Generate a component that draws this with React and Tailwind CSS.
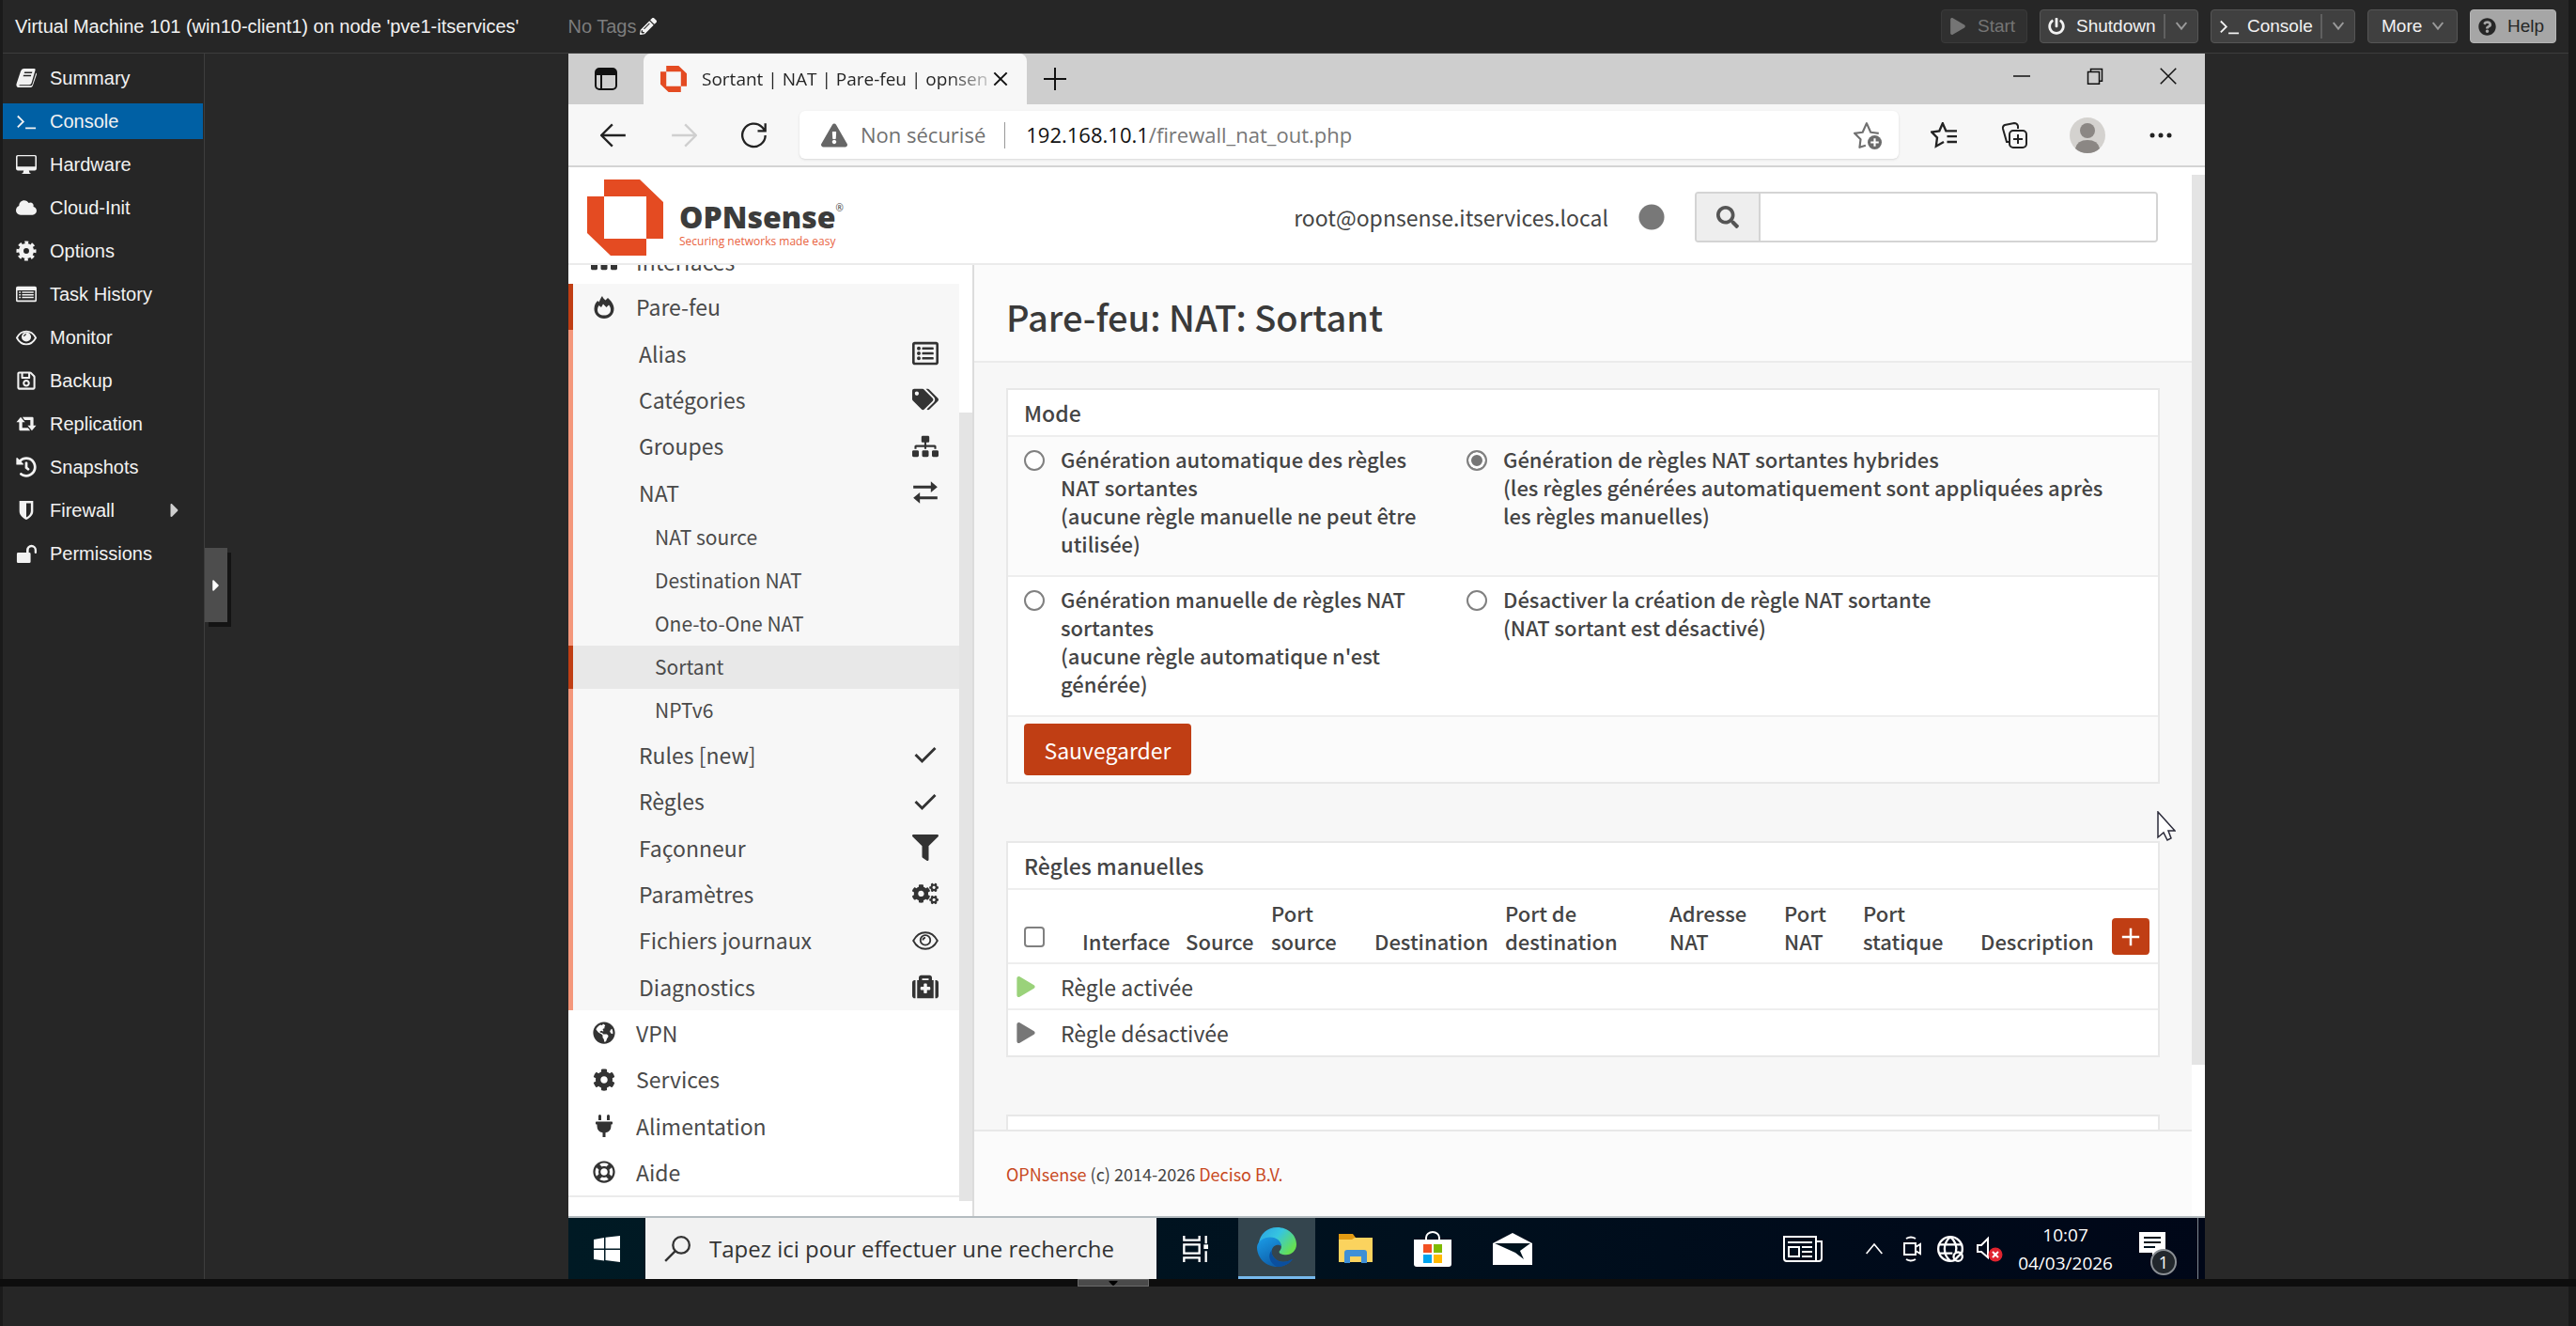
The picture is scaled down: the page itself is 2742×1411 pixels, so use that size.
import { useState } from 'react';
import {
    FaCloud, FaCog, FaHistory, FaPencilAlt, FaPlay, FaPowerOff, FaQuestionCircle, FaRegListAlt,
    FaRegSave, FaCaretRight, FaCaretDown, FaTags, FaSitemap, FaFilter, FaCogs, FaMedkit,
    FaGlobeAmericas, FaPlug, FaRegLifeRing, FaSearch, FaExclamationTriangle, FaCircle,
} from 'react-icons/fa';

/* ---------- small icons ---------- */

const Line = ({ children, className, box = '0 0 24 24', width = 2 }) => (
    <svg viewBox={box} className={className} fill="none" stroke="currentColor" strokeWidth={width} aria-hidden="true">
        {children}
    </svg>
);

const Solid = ({ children, className }) => (
    <svg viewBox="0 0 24 24" className={className} fill="currentColor" fillRule="evenodd" aria-hidden="true">
        {children}
    </svg>
);

const BookIcon = ({ className }) => (
    <Solid className={className}>
        <path d="M9 1h12q2 0 1.400 2L18 18q-.6 2-2.500 2H5q-1.500 0-1.500 1H17q1.500 0 2-1.500L23.300 6q1 .8.500 2.500L19.500 21q-.6 2-2.500 2H4q-4 0-3.500-4L5.500 4Q6.500 1 9 1zm1 4l-.5 1.600h9L19 5zm-1.200 3.500L8.300 10h9l.5-1.500z" />
    </Solid>
);

const TerminalIcon = ({ className }) => (
    <Line className={className}>
        <path d="M2 6l6.500 6.500L2 19M11 20h12" />
    </Line>
);

const DesktopIcon = ({ className }) => (
    <Solid className={className}>
        <path d="M2 1h20a2 2 0 0 1 2 2v14a2 2 0 0 1-2 2h-7l1 3h1v1H7v-1h1l1-3H2a2 2 0 0 1-2-2V3a2 2 0 0 1 2-2zm-.3 2v11.500h20.600V3a.5.500 0 0 0-.5-.5H2.200a.5.500 0 0 0-.5.500z" />
    </Solid>
);

const GearIcon = ({ className }) => (
    <svg viewBox="0 0 24 24" className={className} fill="none" stroke="currentColor" aria-hidden="true">
        <circle cx="12" cy="12" r="6" strokeWidth="5.500" />
        <circle cx="12" cy="12" r="9.500" strokeWidth="4" strokeDasharray="4 3.461" strokeDashoffset="2" />
    </svg>
);

const TaskIcon = ({ className }) => (
    <Solid className={className}>
        <path d="M2 3h20a2 2 0 0 1 2 2v14a2 2 0 0 1-2 2H2a2 2 0 0 1-2-2V5a2 2 0 0 1 2-2zm-.3 4.500v11.500h20.600V7.500z" />
        <path d="M3.500 9h2v1.600h-2zM7 9h13.500v1.600H7zM3.500 12h2v1.600h-2zM7 12h13.500v1.600H7zM3.500 15h2v1.600h-2zM7 15h13.500v1.600H7z" />
    </Solid>
);

const MonitorIcon = ({ className }) => (
    <Line className={className}>
        <path d="M1 12.500Q5 5 12 5t11 7.500Q19 20 12 20T1 12.500z" />
        <circle cx="12" cy="11.500" r="5.500" fill="currentColor" stroke="none" />
        <path d="M9.500 11Q9.500 8.500 12 8.500" stroke="#262626" strokeWidth="1.200" />
    </Line>
);

const RetweetIcon = ({ className }) => (
    <Solid className={className}>
        <path d="M5.500 4l5 6H7.300v6.500H14l2.500 3.500H5q-1.300 0-1.300-1.500V10H.5zM18.500 20l-5-6h3.200V7.500H10L7.500 4H19q1.300 0 1.300 1.500V14h3.200z" />
    </Solid>
);

const ShieldIcon = ({ className }) => (
    <Solid className={className}>
        <path d="M4 1h16v12c0 5-5 8.500-8 10-3-1.500-8-5-8-10zm8 2.700v16.500c2.500-1.500 5.300-4 5.300-7.200V3.700z" />
    </Solid>
);

const UnlockIcon = ({ className }) => (
    <Solid className={className}>
        <path d="M2.500 11H12V8a6 6 0 0 1 12 0v3q0 1-1.200 1T21.500 11V8a3.300 3.300 0 0 0-6.600 0v3h.6q1.500 0 1.500 1.500v9q0 1.500-1.500 1.500h-13Q1 23 1 21.500v-9Q1 11 2.500 11z" />
    </Solid>
);

const FireIcon = ({ className }) => (
    <Solid className={className}>
        <path d="M10 0c.6 2 2 3 3.500 4.500L16 2c3.500 3 6.500 7 6.500 11.500C22.500 19.500 18 24 12 24S1.500 19.500 1.500 13.500c0-4 2-7 3.700-8.500l1.300 1.500C7.500 4.500 8.500 2 10 0zM6.500 10c-1 1.500-1.500 3-1.500 4.500 0 4 3 6 7 6s7-2 7-6c0-2-.8-3.800-2-5L14.500 12 11 8.500 9 12z" />
    </Solid>
);

const EyeOutlineIcon = ({ className }) => (
    <Line className={className} width={1.6}>
        <path d="M1 12Q5 4.500 12 4.500T23 12Q19 19.500 12 19.500T1 12z" />
        <circle cx="12" cy="11.500" r="4.500" />
        <path d="M9.800 11.500Q9.800 9.300 12 9.300" />
    </Line>
);

const SwapIcon = ({ className }) => (
    <Solid className={className}>
        <path d="M1 5.700h16V2l6 5-6 5V8.300H1zM23 15.700H7V12l-6 5 6 5v-3.700h16z" />
    </Solid>
);

const CheckIcon = ({ className }) => (
    <Line className={className} width={2.5}>
        <path d="M3 12l6 6L21 6" />
    </Line>
);

const ChevronIcon = ({ className }) => (
    <Line className={className} width={3}>
        <path d="M4 6l8 10 8-10" />
    </Line>
);

const OpnMark = ({ className }) => (
    <svg viewBox="0 0 81 81" className={className} aria-hidden="true">
        <path fill="#e44b22" fillRule="evenodd" d="M18 0h38l25 24v39H63v18H25L0 57V18h18zM18 18v45h45V18z" />
    </svg>
);

const EdgeIcon = ({ className }) => (
    <svg viewBox="0 0 24 24" className={className} aria-hidden="true">
        <defs>
            <linearGradient id="edgeTop" x1="0" y1="0" x2="1" y2="0.600">
                <stop offset="0" stopColor="#2a9fe4" />
                <stop offset="0.500" stopColor="#36c5e0" />
                <stop offset="1" stopColor="#66e052" />
            </linearGradient>
            <linearGradient id="edgeLow" x1="0" y1="0" x2="0.600" y2="1">
                <stop offset="0" stopColor="#1b9de8" />
                <stop offset="1" stopColor="#0c59a4" />
            </linearGradient>
        </defs>
        <path fill="url(#edgeTop)" d="M1 10C1.800 4 6.400 0 12.200 0 19 0 24 4.800 24 10.300c0 4-3 6.400-6.300 6.400-2.600 0-4.200-.8-4.200-1.700 0-.7 1.300-1.200 1.300-3.300C14.800 9 12 7 8.500 7 5 7 2.500 8 1 10z" />
        <path fill="url(#edgeLow)" d="M0 12c.3-3.500 4-6 8-6 4 0 6.800 2.500 6.800 5.500-1-1.500-5-1.200-5.800 2.300-.8 3.400 2.800 7.200 7 7.200 2.400 0 4.300-.9 5.700-1.700C19.700 22.300 16.200 24 12.200 24 5.500 24 0 18.700 0 12z" />
        <path fill="#0b4f9e" d="M9 13.800c-.8 3.400 2.800 7.200 7 7.200 2.400 0 4.300-.9 5.700-1.700-2 3-5.500 4.700-9.500 4.700C8 22 6 17 9 13.800z" />
    </svg>
);

const FolderIcon = ({ className }) => (
    <svg viewBox="0 0 38 32" className={className} aria-hidden="true">
        <path fill="#e39b12" d="M1 0h15l3 4h17v8H1z" />
        <path fill="#fbd35e" d="M1 6h14l3-2h19v26H1z" />
        <path fill="#3f8fd6" d="M7 31V20q0-3 3-3h18q3 0 3 3v11h-6v-7H13v7z" />
    </svg>
);

const StoreIcon = ({ className }) => (
    <svg viewBox="0 0 40 40" className={className} aria-hidden="true">
        <path d="M13 11V8a7 6 0 0 1 14 0v3" fill="none" stroke="#fff" strokeWidth="2" />
        <path d="M0 10h40v26a3 3 0 0 1-3 3H3a3 3 0 0 1-3-3z" fill="#fff" />
        <path d="M10 15h9v9h-9z" fill="#f25022" />
        <path d="M21 15h9v9h-9z" fill="#7fba00" />
        <path d="M10 26h9v9h-9z" fill="#00a4ef" />
        <path d="M21 26h9v9h-9z" fill="#ffb900" />
    </svg>
);

const MailIcon = ({ className }) => (
    <svg viewBox="0 0 42 34" className={className} aria-hidden="true">
        <path fill="#fff" d="M0 11L21 0l21 11v23H0z" />
        <path fill="#00131e" d="M2 11h38L29 19l4 9-9-7z" />
    </svg>
);

const FavAddIcon = ({ className }) => (
    <svg viewBox="0 0 28 28" className={className} fill="none" stroke="#707070" strokeWidth="2" aria-hidden="true">
        <path d="M12 24l-6 2 1-8-6-6 8-1 4-9 4 9 8 1" strokeLinejoin="round" />
        <circle cx="21" cy="21" r="7" fill="#6b6b6b" stroke="none" />
        <path d="M21 17v8M17 21h8" stroke="#fff" />
    </svg>
);

const CollectionsIcon = ({ className }) => (
    <Line className={className} box="0 0 28 28">
        <path d="M8 21H6L2 7q-.5-3 2-4l10-2q3 0 4 3v3" />
        <rect x="9" y="9" width="18" height="18" rx="4" />
        <path d="M18 13v10M13 18h10" />
    </Line>
);

/* ---------- data ---------- */

const vmMenu = [
    { label: 'Summary', icon: BookIcon },
    { label: 'Console', icon: TerminalIcon, active: true },
    { label: 'Hardware', icon: DesktopIcon },
    { label: 'Cloud-Init', icon: FaCloud },
    { label: 'Options', icon: GearIcon },
    { label: 'Task History', icon: TaskIcon },
    { label: 'Monitor', icon: MonitorIcon },
    { label: 'Backup', icon: FaRegSave },
    { label: 'Replication', icon: RetweetIcon },
    { label: 'Snapshots', icon: FaHistory },
    { label: 'Firewall', icon: ShieldIcon, more: true },
    { label: 'Permissions', icon: UnlockIcon },
];

// level 0 = section, 1 = entry of the open section, 2 = entry below NAT
const opnMenu = [
    { label: 'Pare-feu', level: 0, icon: FireIcon, open: true },
    { label: 'Alias', level: 1, icon: FaRegListAlt },
    { label: 'Catégories', level: 1, icon: FaTags },
    { label: 'Groupes', level: 1, icon: FaSitemap },
    { label: 'NAT', level: 1, icon: SwapIcon },
    { label: 'NAT source', level: 2 },
    { label: 'Destination NAT', level: 2 },
    { label: 'One-to-One NAT', level: 2 },
    { label: 'Sortant', level: 2, active: true },
    { label: 'NPTv6', level: 2 },
    { label: 'Rules [new]', level: 1, icon: CheckIcon },
    { label: 'Règles', level: 1, icon: CheckIcon },
    { label: 'Façonneur', level: 1, icon: FaFilter },
    { label: 'Paramètres', level: 1, icon: FaCogs },
    { label: 'Fichiers journaux', level: 1, icon: EyeOutlineIcon },
    { label: 'Diagnostics', level: 1, icon: FaMedkit },
    { label: 'VPN', level: 0, icon: FaGlobeAmericas },
    { label: 'Services', level: 0, icon: FaCog },
    { label: 'Alimentation', level: 0, icon: FaPlug },
    { label: 'Aide', level: 0, icon: FaRegLifeRing },
];

const modes = [
    {
        id: 'automatic',
        lines: ['Génération automatique des règles', 'NAT sortantes', '(aucune règle manuelle ne peut être', 'utilisée)'],
    },
    {
        id: 'hybrid',
        lines: ['Génération de règles NAT sortantes hybrides', '(les règles générées automatiquement sont appliquées après', 'les règles manuelles)'],
    },
    {
        id: 'advanced',
        lines: ['Génération manuelle de règles NAT', 'sortantes', "(aucune règle automatique n'est", 'générée)'],
    },
    {
        id: 'disabled',
        lines: ['Désactiver la création de règle NAT sortante', '(NAT sortant est désactivé)'],
    },
];

const columns = [
    { label: 'Interface', size: 'w-[116px] pl-[23px]' },
    { label: 'Source', size: 'w-[91px] pl-[17px]' },
    { label: 'Port source', size: 'w-[110px] pl-[17px]' },
    { label: 'Destination', size: 'w-[139px] pl-[17px]' },
    { label: 'Port de destination', size: 'w-[175px] pl-[17px]' },
    { label: 'Adresse NAT', size: 'w-[122px] pl-[17px]' },
    { label: 'Port NAT', size: 'w-[84px] pl-[17px]' },
    { label: 'Port statique', size: 'w-[125px] pl-[17px]' },
    { label: 'Description', size: 'w-[140px] pl-[17px]' },
];

/* ---------- Proxmox shell ---------- */

const TopBar = () => (
    <header className="flex h-[57px] shrink-0 items-center border-b border-[#3d3d3d] px-[13px] text-xl">
        <h1 className="whitespace-nowrap">Virtual Machine 101 (win10-client1) on node 'pve1-itservices'</h1>
        <span className="ml-[52px] text-[#7d7d7d]">No Tags</span>
        <button type="button" aria-label="Edit Tags" className="ml-1">
            <FaPencilAlt className="size-[18px]" />
        </button>
        <div className="ml-auto flex gap-[13px] text-[19px]">
            <button type="button" disabled className="flex h-9 w-[92px] items-center gap-3 rounded border border-[#3a3a3a] bg-[#303030] pl-2 text-[#757575]">
                <FaPlay className="size-[18px]" />
                Start
            </button>
            <div className="flex h-9 w-[169px] items-center rounded border border-[#565656] bg-[#404040]">
                <button type="button" className="flex items-center gap-3 pl-2">
                    <FaPowerOff className="size-[18px]" />
                    Shutdown
                </button>
                <button type="button" aria-label="Shutdown options" className="ml-auto flex h-[26px] w-9 items-center justify-center border-l-2 border-[#606060] text-[#9a9a9a]">
                    <ChevronIcon className="size-4" />
                </button>
            </div>
            <div className="flex h-9 w-[154px] items-center rounded border border-[#565656] bg-[#404040]">
                <button type="button" className="flex items-center gap-2 pl-2">
                    <TerminalIcon className="size-[22px]" />
                    Console
                </button>
                <button type="button" aria-label="Console options" className="ml-auto flex h-[26px] w-9 items-center justify-center border-l-2 border-[#606060] text-[#9a9a9a]">
                    <ChevronIcon className="size-4" />
                </button>
            </div>
            <button type="button" className="flex h-9 w-24 items-center justify-between rounded border border-[#565656] bg-[#404040] pr-3 pl-3.5">
                More
                <ChevronIcon className="size-4 text-[#9a9a9a]" />
            </button>
            <button type="button" className="flex h-9 w-[92px] items-center gap-3 rounded border border-[#b5b5b5] bg-[#a6a6a6] pl-2 text-[#262626]">
                <FaQuestionCircle className="size-[19px]" />
                Help
            </button>
        </div>
    </header>
);

const VmNav = () => (
    <nav className="w-[215px] shrink-0 border-r border-[#3d3d3d] pt-[7px] text-xl">
        <ul className="flex flex-col gap-2">
            {vmMenu.map(({ label, icon: Icon, active, more }) => (
                <li key={label}>
                    <a
                        href="#"
                        className={`mr-px flex h-[38px] items-center pl-3 ${active ? 'bg-[#0060a4]' : ''}`}
                    >
                        <span className="flex w-[26px] justify-center">
                            <Icon className="size-[22px]" />
                        </span>
                        <span className="ml-3">{label}</span>
                        {more && <FaCaretRight className="mr-[18px] ml-auto size-6 text-[#cfcfcf]" />}
                    </a>
                </li>
            ))}
        </ul>
    </nav>
);

/* ---------- browser in the guest ---------- */

const TabStrip = () => (
    <div className="flex h-[54px] shrink-0 items-stretch bg-[#cecece] text-[#111]">
        <button type="button" aria-label="Tab actions" className="flex w-20 items-center justify-center">
            <svg viewBox="0 0 24 24" className="size-6" fill="none" stroke="currentColor" strokeWidth="2">
                <rect x="1" y="1" width="22" height="22" rx="4" />
                <path d="M2 5h20" strokeWidth="6" />
                <path d="M7 7v15" />
            </svg>
        </button>
        <div className="flex w-[408px] items-center rounded-t-lg bg-[#f7f7f7] pr-4 pl-[18px]">
            <OpnMark className="size-7 shrink-0" />
            <span className="ml-4 flex-1 bg-linear-to-r from-[#222] from-85% to-[#ccc] bg-clip-text text-[19px] whitespace-nowrap text-transparent">
                Sortant | NAT | Pare-feu | opnsen
            </span>
            <button type="button" aria-label="Close tab" className="flex size-6 items-center justify-center">
                <Line className="size-4" width={3}>
                    <path d="M2 2l20 20M22 2L2 22" />
                </Line>
            </button>
        </div>
        <button type="button" aria-label="New tab" className="ml-[18px] flex items-center">
            <Line className="size-6">
                <path d="M12 0v24M0 12h24" />
            </Line>
        </button>
        <div className="ml-auto flex pb-1.5">
            <button type="button" aria-label="Minimize" className="flex w-[78px] items-center justify-center">
                <Line className="size-[18px]">
                    <path d="M0 12h24" />
                </Line>
            </button>
            <button type="button" aria-label="Restore" className="flex w-[78px] items-center justify-center">
                <Line className="size-[18px]">
                    <path d="M2 6h16v17H2zM6 6V2h16v17h-4" />
                </Line>
            </button>
            <button type="button" aria-label="Close" className="flex w-[78px] items-center justify-center">
                <Line className="size-[18px]">
                    <path d="M1 1l22 22M23 1L1 23" />
                </Line>
            </button>
        </div>
    </div>
);

const AddressBar = () => (
    <div className="flex h-[67px] shrink-0 items-center border-b-2 border-[#d4d4d4] bg-[#f7f7f7] pr-[35px] pl-[34px] text-[#222]">
        <button type="button" aria-label="Back">
            <Line className="size-7">
                <path d="M23 12H1M11 2L1 12l10 10" />
            </Line>
        </button>
        <button type="button" aria-label="Forward" disabled className="ml-[47px] text-[#cfcfcf]">
            <Line className="size-7">
                <path d="M1 12h22M13 2l10 10-10 10" />
            </Line>
        </button>
        <button type="button" aria-label="Reload" className="ml-[47px]">
            <Line className="size-7">
                <path d="M22 12a10.500 10.500 0 1 1-3-7.500L22 8M22 1v7h-7" />
            </Line>
        </button>
        <div className="ml-[34px] flex h-[51px] flex-1 items-center rounded-md bg-white pr-[18px] pl-[23px] shadow-sm">
            <FaExclamationTriangle className="size-7 text-[#666]" />
            <span className="ml-3.5 text-[22px] whitespace-nowrap text-[#707070]">Non sécurisé</span>
            <span className="mr-[22px] ml-5 h-7 w-px bg-[#999]" />
            <span className="text-[22px] whitespace-nowrap text-[#777]">
                <span className="text-[#111]">192.168.10.1</span>/firewall_nat_out.php
            </span>
            <button type="button" aria-label="Add to favorites" className="ml-auto">
                <FavAddIcon className="size-[30px]" />
            </button>
        </div>
        <button type="button" aria-label="Favorites" className="ml-[34px]">
            <Line className="size-7">
                <path d="M12 18l-7 4 1-8-5-5 7-1 3-7 3 7h2M16 8h8M15 13h9M15 18h9" />
            </Line>
        </button>
        <button type="button" aria-label="Collections" className="ml-[47px]">
            <CollectionsIcon className="size-7" />
        </button>
        <button type="button" aria-label="Profile" className="ml-[45px]">
            <svg viewBox="0 0 38 38" className="size-[38px]">
                <circle cx="19" cy="19" r="19" fill="#d4d2cf" />
                <circle cx="19" cy="14" r="8" fill="#8b8784" />
                <path d="M6 33q2-9 13-9t13 9q-5 5-13 5T6 33z" fill="#8b8784" />
            </svg>
        </button>
        <button type="button" aria-label="Settings" className="ml-[47px]">
            <svg viewBox="0 0 24 24" className="size-6" fill="currentColor">
                <circle cx="3" cy="12" r="2.500" />
                <circle cx="12" cy="12" r="2.500" />
                <circle cx="21" cy="12" r="2.500" />
            </svg>
        </button>
    </div>
);

/* ---------- OPNsense page ---------- */

const OpnHeader = () => (
    <header className="flex h-[104px] shrink-0 items-center border-b-2 border-[#ebebeb] bg-white pt-1 pr-9 pl-5">
        <OpnMark className="size-[81px]" />
        <div className="ml-[17px] pt-4 font-['Open_Sans',sans-serif]">
            <div className="flex text-[32px] leading-9 font-extrabold text-[#3c3c3b]">
                OPNsense
                <sup className="top-0 text-[10px] leading-4 font-normal">®</sup>
            </div>
            <div className="text-xs leading-4 text-[#e9633f]">Securing networks made easy</div>
        </div>
        <span className="ml-auto text-[23px] whitespace-nowrap">root@opnsense.itservices.local</span>
        <FaCircle className="ml-8 size-7 text-[#787878]" />
        <div className="ml-8 flex h-[54px] w-[493px] overflow-hidden rounded border-2 border-[#d4d4d4]">
            <label htmlFor="menu-search" className="flex w-[68px] items-center justify-center border-r-2 border-[#d4d4d4] bg-[#eeeeee]">
                <FaSearch className="size-6 text-[#555]" />
            </label>
            <input id="menu-search" type="text" aria-label="Search" className="min-w-0 flex-1 bg-white px-3 outline-none" />
        </div>
    </header>
);

const rowTone = ({ level, open, active }) => {
    if (active) return 'border-[#c03e14] bg-[#e8e8e8]';
    if (open) return 'border-[#c03e14] bg-[#f7f7f7]';
    if (level > 0) return 'border-[#f4977b] bg-[#f7f7f7]';
    return 'border-white bg-white';
};

const OpnNav = () => (
    <nav className="flex w-[432px] shrink-0 bg-white text-[23px] text-[#4a4a4a]">
        <div className="flex min-h-0 flex-1 flex-col">
            {/* scrolled half out of view */}
            <div className="flex h-5 shrink-0 items-end overflow-hidden pb-3 pl-[24px] leading-6">
                <FaSitemap className="size-7 shrink-0 text-[#333]" />
                <span className="ml-5">Interfaces</span>
            </div>
            <ul className="flex flex-1 flex-col border-b-2 border-[#ebebeb]">
                {opnMenu.map((item) => {
                    const Icon = item.icon;
                    if (item.level === 2) {
                        return (
                            <li key={item.label} className="h-[46px] shrink-0">
                                <a href="#" className={`flex h-full items-center border-l-[5px] pl-[87px] text-[21px] ${rowTone(item)}`}>
                                    {item.label}
                                </a>
                            </li>
                        );
                    }
                    return (
                        <li key={item.label} className="min-h-[49px] flex-1">
                            <a href="#" className={`flex h-full items-center border-l-[5px] ${rowTone(item)}`}>
                                {item.level === 0 && (
                                    <span className="ml-[19px] flex w-7 justify-center">
                                        <Icon className="size-6 text-[#333]" />
                                    </span>
                                )}
                                <span className={item.level === 0 ? 'ml-5' : 'ml-[70px]'}>{item.label}</span>
                                {item.level === 1 && (
                                    <span className="mr-[21px] ml-auto flex w-[30px] justify-center">
                                        <Icon className="size-7 text-[#333]" />
                                    </span>
                                )}
                            </a>
                        </li>
                    );
                })}
            </ul>
            <div className="h-5 shrink-0" />
        </div>
        <div className="flex w-4 flex-col border-r-2 border-[#dcdcdc] pt-[157px] pb-4">
            <div className="flex-1 bg-[#e4e4e4]" />
        </div>
    </nav>
);

const ModeOption = ({ id, lines, checked, onChange }) => (
    <label className="flex gap-[17px]">
        <input
            type="radio"
            name="mode"
            value={id}
            checked={checked}
            onChange={() => onChange(id)}
            className="mt-1.5 size-[22px] shrink-0 appearance-none rounded-full border-2 border-[#808080] bg-white checked:bg-[#767676] checked:shadow-[inset_0_0_0_3px_white]"
        />
        <span className="text-[22px] leading-[30px] font-medium whitespace-nowrap">
            {lines.map((line) => (
                <span key={line} className="block">{line}</span>
            ))}
        </span>
    </label>
);

const ModeCard = () => {
    const [mode, setMode] = useState('hybrid');

    return (
        <form onSubmit={(e) => e.preventDefault()} className="border-2 border-[#e8e8e8] bg-white">
            <h2 className="flex h-12 items-center pl-[17px] font-medium">Mode</h2>
            <div className="grid min-h-[149px] grid-cols-[471px_1fr] border-t-2 border-[#eeeeee] bg-[#fbfbfb] pt-2 pl-[17px]">
                {modes.slice(0, 2).map((m) => (
                    <ModeOption key={m.id} {...m} checked={mode === m.id} onChange={setMode} />
                ))}
            </div>
            <div className="grid min-h-[149px] grid-cols-[471px_1fr] border-t-2 border-[#eeeeee] pt-2 pl-[17px]">
                {modes.slice(2).map((m) => (
                    <ModeOption key={m.id} {...m} checked={mode === m.id} onChange={setMode} />
                ))}
            </div>
            <div className="border-t-2 border-[#eeeeee] bg-[#fbfbfb] py-[7px] pl-[17px]">
                <button type="submit" className="h-[55px] w-[178px] rounded bg-[#c03e14] text-white">
                    Sauvegarder
                </button>
            </div>
        </form>
    );
};

const RulesCard = () => (
    <section className="border-2 border-[#e8e8e8] bg-white">
        <h2 className="flex h-12 items-center pl-[17px] font-medium">Règles manuelles</h2>
        <table className="w-full table-fixed border-collapse text-left">
            <thead>
                <tr className="h-[79px] border-t-2 border-[#eeeeee] align-bottom text-[22px] leading-[30px]">
                    <th className="w-14 pb-4 pl-[17px]">
                        <input
                            type="checkbox"
                            aria-label="Tout sélectionner"
                            className="block size-[22px] appearance-none rounded border-2 border-[#808080] bg-white"
                        />
                    </th>
                    {columns.map(({ label, size }) => (
                        <th key={label} className={`${size} pb-2 font-medium`}>{label}</th>
                    ))}
                    <th className="w-[66px] pb-2 pl-[17px]">
                        <button type="button" aria-label="Ajouter" className="flex h-[39px] w-10 items-center justify-center rounded bg-[#c03e14] text-white">
                            <Line className="size-5" width={3}>
                                <path d="M12 1v22M1 12h22" />
                            </Line>
                        </button>
                    </th>
                </tr>
            </thead>
            <tbody>
                <tr className="h-[49px] border-t-2 border-[#eeeeee]">
                    <td className="pl-2">
                        <FaPlay className="size-[22px] text-[#9ad27a]" />
                    </td>
                    <td colSpan={10}>Règle activée</td>
                </tr>
                <tr className="h-[49px] border-t-2 border-[#eeeeee]">
                    <td className="pl-2">
                        <FaPlay className="size-[22px] text-[#777]" />
                    </td>
                    <td colSpan={10}>Règle désactivée</td>
                </tr>
            </tbody>
        </table>
    </section>
);

const OpnPage = () => (
    <div className="flex min-h-0 flex-1 font-['Noto_Sans_CJK_SC',sans-serif] text-[#444]">
        <div className="flex min-w-0 flex-1 flex-col">
            <OpnHeader />
            <div className="flex min-h-0 flex-1">
                <OpnNav />
                <main className="flex min-w-0 flex-1 flex-col bg-[#f7f7f7] text-[23px] leading-7">
                    <div className="flex h-[104px] shrink-0 items-center border-b-2 border-[#ebebeb] bg-[#fbfbfb] px-[34px] pt-2">
                        <h1 className="text-[38px] font-medium whitespace-nowrap text-[#3a3a3a]">Pare-feu: NAT: Sortant</h1>
                    </div>
                    <div className="relative flex min-h-0 flex-1 flex-col gap-[61px] overflow-hidden pt-[27px] pr-[34px] pl-[34px]">
                        <ModeCard />
                        <RulesCard />
                        <section className="h-24 shrink-0 border-2 border-[#e8e8e8] bg-white" />
                        {/* mouse pointer of the guest */}
                        <svg viewBox="0 0 20 32" className="absolute top-[477px] right-[17px] h-8 w-5" fill="#fff" stroke="#2b2b3a" strokeWidth="1.500">
                            <path d="M1 1v27l6-5 4 8 4-2-3-8h7z" />
                        </svg>
                    </div>
                    <footer className="flex h-[92px] shrink-0 items-center border-t-2 border-[#e8e8e8] bg-[#fbfbfb] pl-[34px] text-lg">
                        <p>
                            <a href="#" className="text-[#c8491f]">OPNsense</a> (c) 2014-2026{' '}
                            <a href="#" className="text-[#c8491f]">Deciso B.V.</a>
                        </p>
                    </footer>
                </main>
            </div>
        </div>
        <div className="flex w-3.5 shrink-0 flex-col bg-white pt-2 pb-[161px]">
            <div className="flex-1 bg-[#e4e4e4]" />
        </div>
    </div>
);

/* ---------- Windows taskbar ---------- */

const Taskbar = () => (
    <footer className="flex h-[67px] shrink-0 items-stretch border-t-2 border-[#b4bcc0] bg-linear-to-r from-[#001a24] to-[#000718] text-white">
        <button type="button" aria-label="Démarrer" className="flex w-[82px] items-center justify-center">
            <svg viewBox="0 0 28 28" className="size-7" fill="#fff">
                <path d="M0 4l11-2v11.500H0zM12.500 1.800L28 0v13.500H12.500zM0 15h11v11.500L0 25zM12.500 15H28v13l-15.500-2z" />
            </svg>
        </button>
        <div className="flex w-[544px] items-center bg-[#f2f2f2] pl-5 text-[#333]">
            <Line className="size-7" width={2}>
                <circle cx="15.500" cy="8.500" r="7.500" />
                <path d="M10 14l-9 9" />
            </Line>
            <input
                type="text"
                aria-label="Recherche"
                placeholder="Tapez ici pour effectuer une recherche"
                className="ml-5 min-w-0 flex-1 bg-transparent text-2xl outline-none placeholder:text-[#333]"
            />
        </div>
        <button type="button" aria-label="Affichage des tâches" className="ml-[27px] flex items-center">
            <Line className="size-7">
                <path d="M2 0v4h14V0M2 24v-4h14v4M2 8h14v8H2zM22 0v7M22 14v10" />
                <path d="M20 8h4v4h-4z" fill="currentColor" stroke="none" />
            </Line>
        </button>
        <button type="button" aria-label="Microsoft Edge" className="ml-8 flex w-[82px] items-center justify-center border-b-3 border-[#76b9ed] bg-[#34454e]">
            <EdgeIcon className="size-[42px]" />
        </button>
        <button type="button" aria-label="Explorateur" className="ml-6 flex items-center">
            <FolderIcon className="h-8 w-[38px]" />
        </button>
        <button type="button" aria-label="Microsoft Store" className="ml-[43px] flex items-center">
            <StoreIcon className="size-10" />
        </button>
        <button type="button" aria-label="Courrier" className="ml-11 flex items-center">
            <MailIcon className="h-[34px] w-[42px]" />
        </button>
        <div className="ml-auto flex items-center">
            <Line className="h-7 w-[42px]" box="0 0 42 28">
                <path d="M1 1h34v26H4q-3 0-3-3zM35 6h6v18q0 3-3 3h-4M5 7h26M6 12h11v10H6zM20 12h11M20 17h11M20 22h11" />
            </Line>
            <Line className="ml-11 h-5 w-[22px]">
                <path d="M2 18L12 6l10 12" />
            </Line>
            <Line className="ml-5 h-7 w-5" box="0 0 20 28">
                <path d="M1 8h12v12H1zM13 12l5-3v10l-5-3M3 3q5-3 10 0M3 25q5 3 10 0" />
            </Line>
            <Line className="ml-4 size-7">
                <circle cx="12" cy="12" r="11" />
                <path d="M12 1c-7 6-7 16 0 22M12 1c6 5 6 10 5 14M2 8h20M2 16h12" />
                <circle cx="19" cy="19" r="4" fill="#000b1a" />
                <path d="M16.500 21.500l5-5" />
            </Line>
            <svg viewBox="0 0 28 28" className="ml-3.5 size-7" fill="none" stroke="#fff" strokeWidth="2">
                <path d="M1 10h4l7-7v20l-7-6H1z" />
                <circle cx="20" cy="20" r="7.500" fill="#e0242f" stroke="none" />
                <path d="M17 17l6 6M23 17l-6 6" />
            </svg>
            <div className="ml-4 text-center text-[19px] leading-[30px]">
                <div>10:07</div>
                <div>04/03/2026</div>
            </div>
            <button type="button" aria-label="Notifications" className="relative mr-[22px] ml-7 flex h-full w-10 items-center pb-2">
                <svg viewBox="0 0 28 28" className="size-7" fill="#fff">
                    <path d="M0 0h28v22H18l-4 6v-6H0z" />
                    <path d="M5 6h18M5 11h18M5 16h12" stroke="#00101c" strokeWidth="2" />
                </svg>
                <span className="absolute right-0 bottom-1 flex size-7 items-center justify-center rounded-full border-2 border-[#8a8f94] bg-[#22272c] text-lg leading-none">
                    1
                </span>
            </button>
            <span className="h-full w-2 border-l border-[#7f8890]" />
        </div>
    </footer>
);

const App = () => (
    <div className="flex h-screen flex-col bg-[#1a1a1a] pr-2 pl-[3px] font-['Liberation_Sans',Arial,sans-serif] text-[#f2f2f2]">
        <div className="flex min-h-0 flex-1 flex-col bg-[#262626]">
            <TopBar />
            <div className="flex min-h-0 flex-1">
                <VmNav />
                <div className="relative flex min-w-0 flex-1 bg-[#282828]">
                    <button
                        type="button"
                        aria-label="Show control bar"
                        className="absolute top-[526px] left-0 flex h-[79px] w-6 items-center justify-center bg-[#4d4d4d] shadow-[4px_5px_0_#141414]"
                    >
                        <FaCaretRight className="size-5 text-white" />
                    </button>
                    <div className="mx-auto flex w-full max-w-[1742px] flex-col font-['Open_Sans',sans-serif]">
                        <TabStrip />
                        <AddressBar />
                        <OpnPage />
                        <Taskbar />
                    </div>
                </div>
            </div>
        </div>
        {/* splitter above the task log */}
        <div className="-mr-2 -ml-[3px] flex h-2 shrink-0 items-stretch bg-[#0d0d0d] pl-[1147px]">
            <button type="button" aria-label="Collapse log" className="flex w-[76px] items-center justify-center overflow-hidden border border-[#6a6a6a] bg-[#4a4a4a]">
                <FaCaretDown className="size-4 shrink-0 text-black" />
            </button>
        </div>
        <div className="h-[42px] shrink-0 bg-[#262626]" />
    </div>
);

export default App;
